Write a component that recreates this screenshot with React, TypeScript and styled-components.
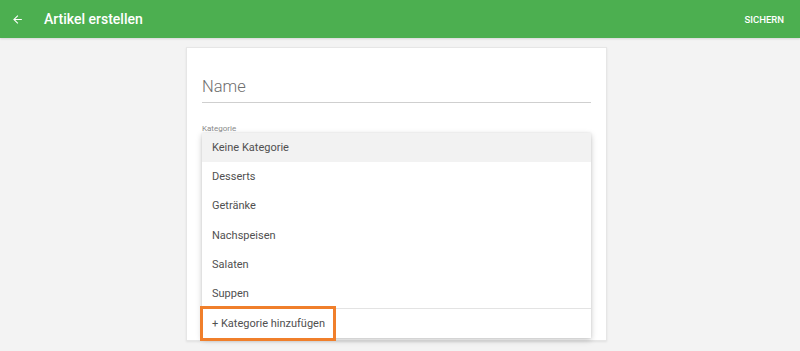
import styled, { createGlobalStyle } from "styled-components";

const GlobalStyle = createGlobalStyle`
  html, body {
    margin: 0;
    padding: 0;
    background: #f3f3f3;
    font-family: Roboto, "Liberation Sans", sans-serif;
  }
`;

const Page = styled.div`
  width: 800px;
  height: 351px;
  overflow: hidden;
  background: #f3f3f3;
`;

const AppBar = styled.header`
  height: 38px;
  background: #4caf50;
  display: flex;
  align-items: center;
  padding: 0 16px 0 11px;
  color: #fff;
  box-shadow: 0 1px 2px rgba(0, 0, 0, 0.12);
`;

const BackButton = styled.button`
  border: 0;
  background: none;
  padding: 0;
  width: 13px;
  height: 13px;
  display: flex;
  color: #fff;
`;

const Title = styled.h1`
  margin: 0 0 0 20px;
  font-size: 14px;
  font-weight: 500;
  flex: 1;
`;

const SaveButton = styled.button`
  border: 0;
  background: none;
  padding: 0;
  color: #fff;
  font-family: inherit;
  font-size: 9.5px;
  font-weight: 500;
`;

const Main = styled.main`
  padding: 9px 0 0 186px;
`;

const Card = styled.section`
  position: relative;
  box-sizing: border-box;
  width: 421px;
  height: 294px;
  background: #fff;
  border: 1px solid #e6e6e6;
  box-shadow: 0 1px 2px rgba(0, 0, 0, 0.08);
  padding: 29px 15px 0 15px;
`;

const NameField = styled.div`
  font-size: 16.5px;
  font-weight: 300;
  color: #6f6f6f;
  padding-bottom: 6px;
  border-bottom: 1px solid #cfcfcf;
`;

const Label = styled.div`
  margin-top: 21px;
  font-size: 8px;
  color: #8a8a8a;
`;

const Menu = styled.ul`
  position: absolute;
  left: 15px;
  top: 85px;
  width: 389px;
  margin: 0;
  padding: 0;
  list-style: none;
  background: #fff;
  box-shadow: 0 2px 6px rgba(0, 0, 0, 0.22), 0 0 2px rgba(0, 0, 0, 0.08);
`;

const Item = styled.li<{ $active?: boolean }>`
  height: 29.2px;
  display: flex;
  align-items: center;
  padding-left: 10px;
  font-size: 11px;
  color: #505050;
  background: ${(p) => (p.$active ? "#f2f2f2" : "#fff")};
`;

const Divider = styled.li`
  height: 1px;
  background: #e3e3e3;
`;

const AddItem = styled(Item)`
  position: relative;
`;

const Highlight = styled.span`
  position: absolute;
  left: -2px;
  top: -3px;
  width: 136px;
  height: 35px;
  box-sizing: border-box;
  border: 3px solid #f07f2b;
`;

const categories = ["Keine Kategorie", "Desserts", "Getränke", "Nachspeisen", "Salaten", "Suppen"];

export default function App() {
  return (
    <Page>
      <GlobalStyle />
      <AppBar>
        <BackButton aria-label="Zurück">
          <svg width="13" height="13" viewBox="0 0 24 24" fill="currentColor">
            <path d="M20 11H7.83l5.59-5.59L12 4l-8 8 8 8 1.41-1.41L7.83 13H20v-2z" />
          </svg>
        </BackButton>
        <Title>Artikel erstellen</Title>
        <SaveButton>SICHERN</SaveButton>
      </AppBar>
      <Main>
        <Card>
          <NameField>Name</NameField>
          <Label>Kategorie</Label>
          <Menu>
            {categories.map((c, i) => (
              <Item key={c} $active={i === 0}>
                {c}
              </Item>
            ))}
            <Divider />
            <AddItem>
              + Kategorie hinzufügen
              <Highlight />
            </AddItem>
          </Menu>
        </Card>
      </Main>
    </Page>
  );
}
